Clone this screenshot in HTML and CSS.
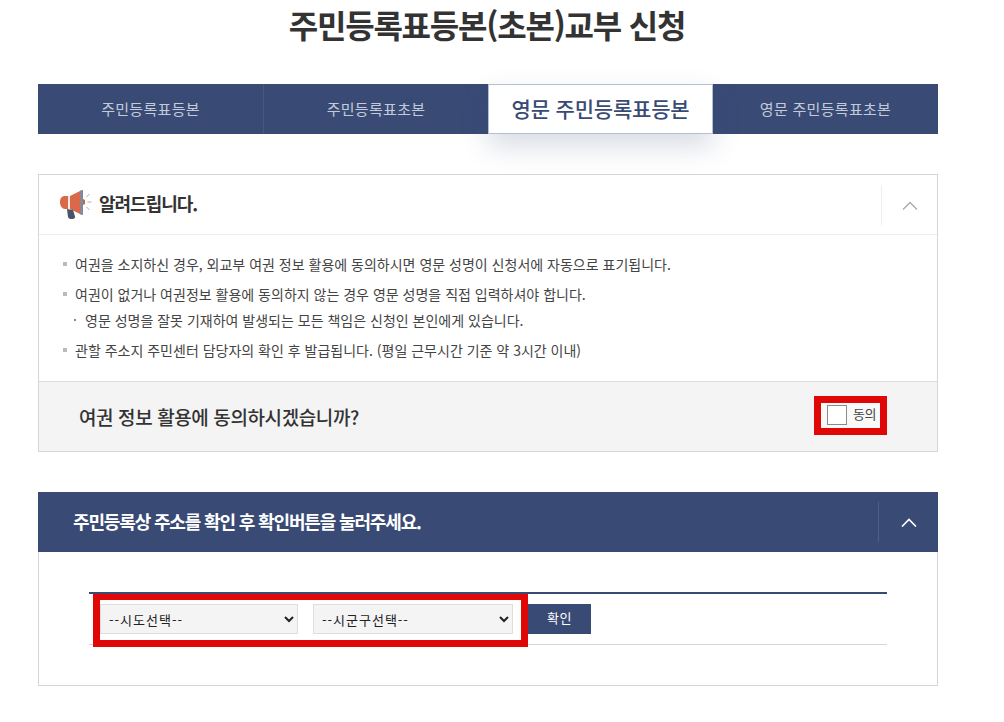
FILE: index.html
```html
<!DOCTYPE html>
<html lang="ko">
<head>
<meta charset="utf-8">
<title>주민등록표등본(초본)교부 신청</title>
<link rel="stylesheet" href="styles.css">
</head>
<body>
<main class="page">
  <h1 class="title">주민등록표등본(초본)교부 신청</h1>
  <nav class="tabs">
    <a class="tab">주민등록표등본</a>
    <a class="tab">주민등록표초본</a>
    <a class="tab active">영문 주민등록표등본</a>
    <a class="tab">영문 주민등록표초본</a>
  </nav>

  <section class="notice">
    <header class="notice-head">
      <svg class="horn" width="33" height="30" viewBox="0 0 33 30">
        <path d="M1 12c0-4 2-6 5-6l3 0 0 13-3 0c-3 0-5-3-5-7z" fill="#d9694a"/>
        <path d="M9 6l2 0 0 13-2 0z" fill="#efeae6"/>
        <path d="M11 6l10-5 0 23-10-5z" fill="#d9694a"/>
        <path d="M21 .5l3-.5 0 25-3-.5z" fill="#858a96"/>
        <path d="M24 9l2 1 0 4-2 1z" fill="#c9654a"/>
        <path d="M8 19l6 1 2 6.500c.3 1.500-.8 2.500-2.500 2.500l-2 0c-1.200 0-2-.8-2.500-2z" fill="#4a5468"/>
        <path d="M27.500 7l3-3M28.500 12l4 0M27.500 17l3 3" stroke="#a9adb5" stroke-width="1" fill="none"/>
      </svg>
      <h2 class="notice-title">알려드립니다.</h2>
      <div class="toggle toggle-light">
        <svg class="chevron-light" width="16" height="9" viewBox="0 0 16 9"><path d="M1 8.500l7-7 7 7" fill="none" stroke="#a8a8a8" stroke-width="1.300"/></svg>
      </div>
    </header>
    <div class="notice-body">
      <p class="item">여권을 소지하신 경우, 외교부 여권 정보 활용에 동의하시면 영문 성명이 신청서에 자동으로 표기됩니다.</p>
      <p class="item">여권이 없거나 여권정보 활용에 동의하지 않는 경우 영문 성명을 직접 입력하셔야 합니다.</p>
      <p class="subitem">영문 성명을 잘못 기재하여 발생되는 모든 책임은 신청인 본인에게 있습니다.</p>
      <p class="item">관할 주소지 주민센터 담당자의 확인 후 발급됩니다. (평일 근무시간 기준 약 3시간 이내)</p>
    </div>
    <div class="consent">
      <strong class="consent-q">여권 정보 활용에 동의하시겠습니까?</strong>
      <label class="agree"><span class="box"></span><span class="agree-text">동의</span></label>
    </div>
  </section>

  <section class="address">
    <header class="address-head">
      <h2 class="address-title">주민등록상 주소를 확인 후 확인버튼을 눌러주세요.</h2>
      <div class="toggle toggle-dark">
        <svg width="16" height="9" viewBox="0 0 16 9"><path d="M1 8.500l7-7 7 7" fill="none" stroke="#fff" stroke-width="1.600"/></svg>
      </div>
    </header>
    <div class="address-body">
      <div class="address-row">
        <div class="highlight">
          <select class="sel sel-a"><option>--시도선택--</option></select>
          <select class="sel sel-b"><option>--시군구선택--</option></select>
        </div>
        <button class="confirm" type="button">확인</button>
      </div>
    </div>
  </section>
</main>
</body>
</html>
```

FILE: styles.css
```css
* { box-sizing: border-box; }
html, body { margin: 0; padding: 0; background: #fff; }
body {
  font-family: "Noto Sans CJK KR", "Noto Sans", sans-serif;
  color: #333;
  height: 722px;
  overflow: hidden;
}
.page { width: 900px; margin-left: 38px; }
.title {
  margin: 0;
  height: 84px;
  padding-right: 2px;
  text-align: center;
  font-size: 32px;
  line-height: 48px;
  font-weight: 700;
  letter-spacing: -1.2px;
  color: #333;
}
.tabs { display: flex; height: 50px; background: #394b75; }
.tab {
  flex: 0 0 225px;
  display: flex;
  align-items: center;
  justify-content: center;
  font-size: 15px;
  letter-spacing: .3px;
  color: #c3cada;
  padding-bottom: 2px;
}
.tab:first-child { flex-basis: 226px; border-right: 1px solid #47587f; }
.tab:nth-child(2) { flex-basis: 224px; }
.tab.active {
  background: #fff;
  color: #394b75;
  font-size: 21px;
  font-weight: 500;
  letter-spacing: -.2px;
  border: 1px solid #b4bfd5;
  box-shadow: 0 12px 28px rgba(57, 75, 117, .2);
  position: relative;
}
.notice {
  margin-top: 40px;
  border: 1px solid #d6d6d6;
  height: 278px;
  display: flex;
  flex-direction: column;
}
.notice-head {
  height: 60px;
  flex: none;
  display: flex;
  align-items: center;
  padding-left: 20px;
  border-bottom: 1px solid #ececec;
}
.horn { flex: none; margin-right: 6px; margin-top: 1px; }
.notice-title {
  margin: -3px 0 0 1px;
  font-size: 18px;
  font-weight: 700;
  letter-spacing: -1px;
  color: #333;
  flex: 1;
}
.toggle {
  flex: none;
  display: flex;
  align-items: center;
  justify-content: center;
}
.toggle-light { width: 56px; height: 40px; border-left: 1px solid #eee; }
.chevron-light { margin-top: 2px; }
.toggle-dark { height: 40px; border-left: 1px solid #4f5f87; width: 60px; }
.notice-body { flex: 1; padding: 19px 0 0 24px; }
.item, .subitem {
  margin: 0;
  font-size: 14px;
  line-height: 20px;
  color: #444;
  position: relative;
  padding-left: 12px;
}
.item { margin-bottom: 10px; }
.item::before {
  content: "";
  position: absolute;
  left: 0;
  top: 8px;
  width: 4px;
  height: 4px;
  background: #bbb;
}
.item:nth-child(2) { margin-bottom: 6px; }
.subitem { padding-left: 22px; margin-bottom: 10px; }
.subitem::before {
  content: "";
  position: absolute;
  left: 11px;
  top: 9px;
  width: 2px;
  height: 2px;
  background: #888;
}
.consent {
  flex: none;
  height: 70px;
  background: #f4f4f4;
  border-top: 1px solid #ddd;
  display: flex;
  align-items: center;
  justify-content: space-between;
  padding: 0 50px 0 40px;
}
.consent-q { font-size: 19px; font-weight: 500; color: #333; letter-spacing: -.4px; margin-top: -1px; }
.agree {
  width: 73px;
  height: 39px;
  margin-bottom: 3px;
  border: 7px solid #e00707;
  background: #f9f9f9;
  display: flex;
  align-items: center;
  padding-left: 6px;
}
.box { width: 20px; height: 20px; background: #fff; border: 1px solid #8a8a8a; flex: none; }
.agree-text { font-size: 13px; margin: -4px 0 0 6px; color: #444; letter-spacing: -.5px; }
.address { margin-top: 40px; border: 1px solid #d6d6d6; border-top: 0; height: 194px; }
.address-head {
  height: 60px;
  margin: 0 -1px;
  background: #394b75;
  display: flex;
  align-items: center;
  padding-left: 35px;
}
.address-title {
  margin: -3px 0 0;
  flex: 1;
  color: #fff;
  font-size: 18px;
  font-weight: 700;
  letter-spacing: -1.15px;
}
.address-body { padding: 40px 50px 0; }
.address-row {
  height: 53px;
  border-top: 2px solid #394b75;
  border-bottom: 1px solid #d6d6d6;
  display: flex;
  align-items: flex-start;
  position: relative;
}
.highlight {
  display: flex;
  gap: 15px;
  border: 7px solid #e00707;
  border-top-width: 6px;
  height: 53px;
  width: 435px;
  margin: 0 0 0 4px;
  padding: 4px 0 0 0;
  background: #fff;
  position: relative;
  flex: none;
}
.sel {
  height: 30px;
  font-family: "Noto Sans CJK KR", sans-serif;
  font-size: 13px;
  letter-spacing: 1px;
  color: #222;
  background: #f4f4f4;
  border: 1px solid #ddd;
  padding-left: 4px;
  border-radius: 0;
}
.sel-a { width: 198px; }
.sel-b { width: 200px; }
.confirm {
  width: 63px;
  height: 30px;
  margin: 10px 0 0 0;
  background: #394b75;
  color: #fff;
  border: 0;
  font-family: "Noto Sans CJK KR", sans-serif;
  font-size: 13px;
  letter-spacing: .5px;
  padding: 0 0 3px;
}
```
